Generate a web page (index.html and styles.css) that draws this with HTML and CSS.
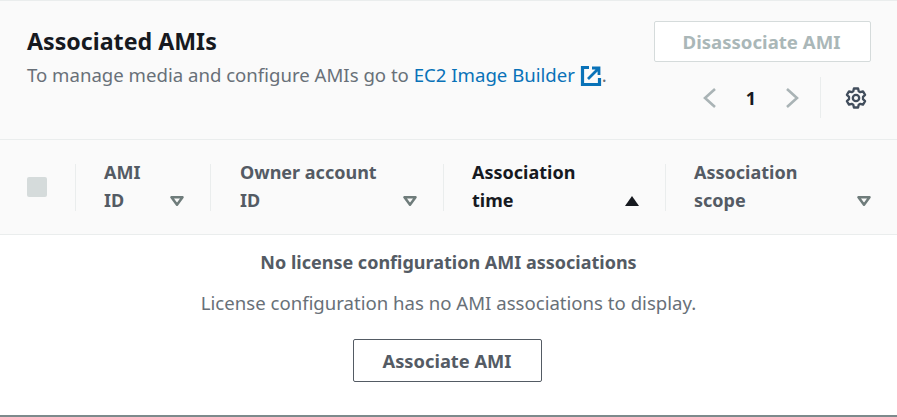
FILE: index.html
```html
<!DOCTYPE html>
<html lang="en">
<head>
<meta charset="utf-8">
<title>Associated AMIs</title>
<link rel="stylesheet" href="styles.css">
</head>
<body>
<section class="panel">
  <header class="head">
    <div class="head-text">
      <h2 class="title">Associated AMIs</h2>
      <p class="desc">To manage media and configure AMIs go to <a class="link" href="#">EC2 Image Builder <svg class="ext" viewBox="0 0 22 22" width="22" height="22"><path d="M9 2.500H2.500v17h17V13" fill="none" stroke="#0972b8" stroke-width="3.200"/><path d="M8 14 18 4M12 3h7v7" fill="none" stroke="#0972b8" stroke-width="2.800"/></svg></a>.</p>
    </div>
    <div class="head-side">
      <button class="btn-disabled" disabled>Disassociate AMI</button>
      <div class="pager">
        <svg class="chev" viewBox="0 0 16 24" width="16" height="24"><path d="M13 3 3 12l10 9" fill="none" stroke="#a9b3b5" stroke-width="2.600"/></svg>
        <span class="page">1</span>
        <svg class="chev" viewBox="0 0 16 24" width="16" height="24"><path d="M3 3l10 9-10 9" fill="none" stroke="#a9b3b5" stroke-width="2.600"/></svg>
        <span class="divider"></span>
        <svg class="gear" viewBox="0 0 24 24" width="24" height="24"><path d="M9.900 2.500h4.200l.6 2.800 1.600.9 2.700-.9 2.100 3.600-2.100 1.900v2.400l2.100 1.900-2.100 3.600-2.700-.9-1.600.9-.6 2.800H9.900l-.6-2.800-1.600-.9-2.700.9-2.100-3.600 2.100-1.900v-2.400L2.900 8.900 5 5.300l2.700.9 1.600-.9z" fill="none" stroke="#414d5c" stroke-width="2.300" stroke-linejoin="round"/><circle cx="12" cy="12" r="3.200" fill="none" stroke="#414d5c" stroke-width="2.300"/></svg>
      </div>
    </div>
  </header>
  <div class="columns">
    <div class="col col-check"><span class="check"></span></div>
    <div class="col col-ami"><span class="col-label">AMI ID</span><svg class="sort" viewBox="0 0 14 10" width="14" height="10"><path d="M1.500 1.200h11L7 8.800z" fill="none" stroke="#6f7c7b" stroke-width="2.500" stroke-linejoin="round"/></svg></div>
    <div class="col col-owner"><span class="col-label">Owner account ID</span><svg class="sort" viewBox="0 0 14 10" width="14" height="10"><path d="M1.500 1.200h11L7 8.800z" fill="none" stroke="#6f7c7b" stroke-width="2.500" stroke-linejoin="round"/></svg></div>
    <div class="col col-time active"><span class="col-label">Association time</span><svg class="sort" viewBox="0 0 14 10" width="14" height="10"><path d="M7 0l7 10H0z" fill="#16191f"/></svg></div>
    <div class="col col-scope"><span class="col-label">Association scope</span><svg class="sort" viewBox="0 0 14 10" width="14" height="10"><path d="M1.500 1.200h11L7 8.800z" fill="none" stroke="#6f7c7b" stroke-width="2.500" stroke-linejoin="round"/></svg></div>
  </div>
  <div class="empty">
    <p class="empty-title">No license configuration AMI associations</p>
    <p class="empty-text">License configuration has no AMI associations to display.</p>
    <button class="btn">Associate AMI</button>
  </div>
</section>
</body>
</html>
```
FILE: styles.css
```css
* { box-sizing: border-box; }
html, body { margin: 0; height: 100%; }
body { background: #fff; font-family: "Noto Sans", "Open Sans", sans-serif; color: #545b64; overflow: hidden; }
.panel { width: 897px; height: 417px; display: flex; flex-direction: column; border-top: 1px solid #eaeded; border-bottom: 2px solid #7d8a8c; }
.head { height: 139px; background: #fafafa; border-bottom: 1px solid #eaeded; display: flex; justify-content: space-between; padding: 20px 27px 0; }
.title { margin: 5px 0 0; font-size: 23.200px; line-height: 30px; font-weight: 700; color: #16191f; }
.desc { margin: 7px 0 0; font-size: 18.600px; line-height: 24px; color: #687078; }
.link { color: #0972b8; text-decoration: none; }
.ext { vertical-align: -5px; }
.head-side { display: flex; flex-direction: column; align-items: flex-end; }
.btn-disabled { width: 217px; height: 41px; background: #fff; border: 1px solid #d5dbdb; border-radius: 2px; color: #aab7b8; font: 700 18.600px "Noto Sans", sans-serif; margin-right: -1px; padding-right: 8px; }
.pager { display: flex; align-items: center; margin-top: 15px; height: 41px; }
.chev { display: block; }
.page { width: 66px; text-align: center; font-size: 18px; font-weight: 700; color: #16191f; }
.divider { width: 1px; height: 41px; background: #eaeded; margin: 0 23px 0 20px; }
.gear { margin-right: 2px; }
.columns { height: 95px; background: #fafafa; border-bottom: 1px solid #eaeded; display: grid; grid-template-columns: 75px 135px 233px 222px 1fr; align-items: center; }
.col { height: 47px; border-left: 1px solid #eaeded; display: flex; justify-content: space-between; align-items: flex-end; padding: 0 26px 0 28px; font-size: 18px; font-weight: 700; line-height: 28px; }
.col-label { display: block; margin-bottom: -3px; }
.col-ami .col-label { width: 40px; }
.col-owner { padding-left: 29px; }
.col-owner .col-label { width: 150px; }
.col-time .col-label, .col-scope .col-label { width: 110px; }
.active { color: #16191f; }
.sort { margin-bottom: 5px; flex: none; }
.col-check { border-left: 0; padding: 0 0 0 27px; align-items: center; }
.check { width: 20px; height: 20px; background: #d5dbdb; border-radius: 2px; }
.empty { flex: 1; display: flex; flex-direction: column; align-items: center; padding-top: 15px; }
.empty-title { margin: 0; font-size: 18px; line-height: 24px; font-weight: 700; }
.empty-text { margin: 17px 0 0; font-size: 18.600px; line-height: 24px; color: #687078; }
.btn { margin: 24px 3px 0 0; width: 189px; height: 43px; background: #fff; border: 1px solid #545b64; border-radius: 2px; color: #545b64; font: 700 18.300px "Noto Sans", sans-serif; }
```
